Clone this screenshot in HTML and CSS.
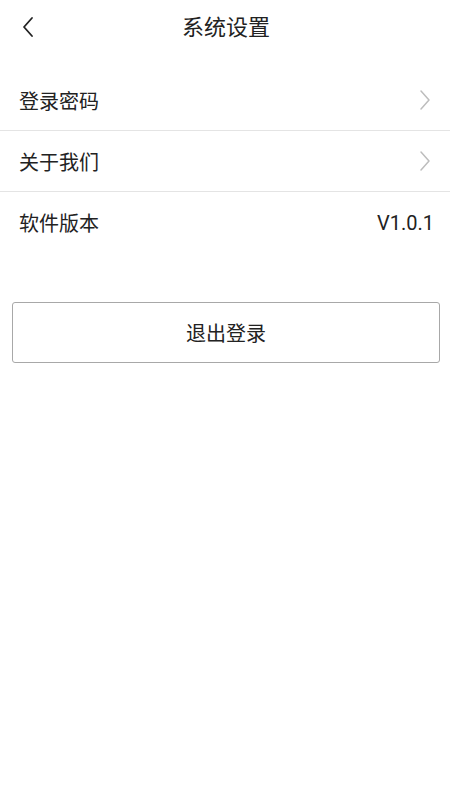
FILE: index.html
```html
<!DOCTYPE html>
<html lang="zh">
<head>
<meta charset="utf-8">
<link rel="stylesheet" href="styles.css">
</head>
<body>
<div class="page">
  <header class="header">
    <span class="back">
      <svg width="14" height="22" viewBox="0 0 14 22"><path d="M11 2 L3 11 L11 20" fill="none" stroke="#222" stroke-width="1.8" stroke-linecap="round" stroke-linejoin="round"/></svg>
    </span>
    <h1 class="title">系统设置</h1>
  </header>
  <ul class="list">
    <li class="row"><span class="label">登录密码</span>
      <svg class="chev" width="14" height="22" viewBox="0 0 14 22"><path d="M3 2 L11 11 L3 20" fill="none" stroke="#bdbdbd" stroke-width="1.5" stroke-linecap="round" stroke-linejoin="round"/></svg>
    </li>
    <li class="row"><span class="label">关于我们</span>
      <svg class="chev" width="14" height="22" viewBox="0 0 14 22"><path d="M3 2 L11 11 L3 20" fill="none" stroke="#bdbdbd" stroke-width="1.5" stroke-linecap="round" stroke-linejoin="round"/></svg>
    </li>
    <li class="row"><span class="label">软件版本</span><span class="value">V1.0.1</span></li>
  </ul>
  <div class="actions">
    <button class="logout" type="button">退出登录</button>
  </div>
</div>
</body>
</html>
```

FILE: styles.css
```css
* { box-sizing: border-box; }
html, body { margin: 0; padding: 0; background: #fff; }
body {
  font-family: Roboto, "Noto Sans CJK SC", "Noto Sans", sans-serif;
  color: #222;
}
.page { width: 450px; min-height: 800px; }
.header {
  position: relative;
  height: 56px;
  display: flex;
  align-items: center;
  justify-content: center;
}
.back {
  position: absolute;
  left: 21px;
  top: 16px;
  display: flex;
}
.title {
  margin: 0 0 0 2px;
  font-size: 22px;
  font-weight: 400;
  line-height: 56px;
  color: #222;
}
.list {
  list-style: none;
  margin: 14px 0 0;
  padding: 0;
}
.row {
  height: 61px;
  display: flex;
  align-items: center;
  justify-content: space-between;
  padding: 0 18px 0 19px;
  border-bottom: 1px solid #e4e4e4;
  font-size: 20px;
}
.row:last-child { border-bottom: none; }
.label { color: #222; }
.value { color: #222; font-size: 20px; margin-right: -2px; }
.actions { padding: 49px 10px 0 12px; }
.logout {
  width: 100%;
  height: 61px;
  background: #fff;
  border: 1px solid #a8a8a8;
  border-radius: 3px;
  font-family: Roboto, "Noto Sans CJK SC", sans-serif;
  font-size: 20px;
  color: #222;
}
```
